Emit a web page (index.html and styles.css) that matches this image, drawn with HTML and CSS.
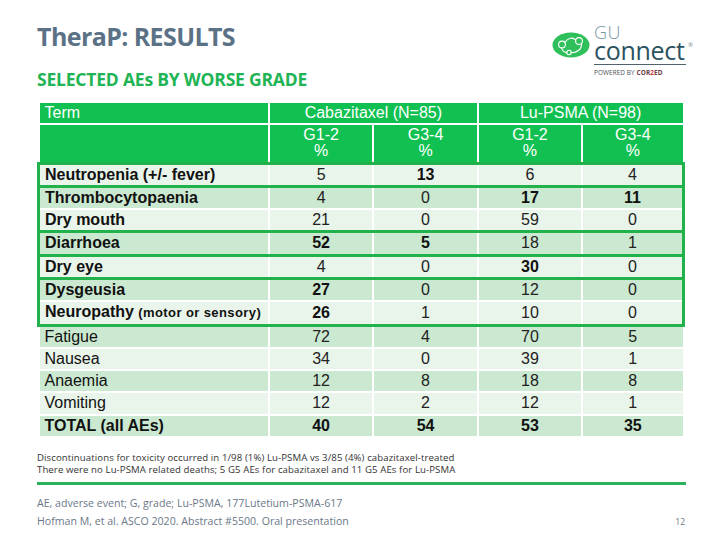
FILE: index.html
```html
<!DOCTYPE html>
<html lang="en">
<head>
<meta charset="utf-8">
<title>TheraP: RESULTS</title>
<link rel="stylesheet" href="styles.css">
</head>
<body>
<div class="slide">
  <header class="top">
    <div class="titles">
      <h1 class="title">TheraP: RESULTS</h1>
      <h2 class="subtitle">SELECTED AEs BY WORSE GRADE</h2>
    </div>
    <div class="logo">
      <svg class="logo-mark" width="38" height="26" viewBox="0 0 38 26" aria-hidden="true">
        <ellipse cx="19" cy="13" rx="18.5" ry="12.5" fill="#2fc05c"/>
        <g fill="none" stroke="#fff" stroke-width="1.1" stroke-linecap="round">
          <circle cx="10" cy="12.5" r="3.4"/>
          <circle cx="27" cy="9" r="3.4"/>
          <circle cx="17" cy="20.5" r="2.2"/>
          <path d="M12.8 10.5 C16 5.5 21 5 23.7 8"/>
          <path d="M29.5 11.5 C30 17 25 21 19.2 20.8"/>
          <path d="M9.5 15.9 C10.5 19 12.5 20.5 14.8 20.6"/>
        </g>
      </svg>
      <div class="logo-text">
        <div class="logo-gu">GU</div>
        <div class="logo-connect">connect</div>
        <div class="logo-powered">POWERED BY <span class="cor">COR<span class="two">2</span>ED</span></div>
        <span class="logo-reg">®</span>
      </div>
    </div>
  </header>

  <table class="ae-table">
    <colgroup>
      <col class="c-term">
      <col class="c-num">
      <col class="c-num">
      <col class="c-num">
      <col class="c-last">
    </colgroup>
    <thead>
      <tr class="h1row">
        <th class="term-h">Term</th>
        <th colspan="2">Cabazitaxel (N=85)</th>
        <th colspan="2">Lu-PSMA (N=98)</th>
      </tr>
      <tr class="h2row">
        <th></th>
        <th>G1-2<br>%</th>
        <th>G3-4<br>%</th>
        <th>G1-2<br>%</th>
        <th>G3-4<br>%</th>
      </tr>
    </thead>
    <tbody>
      <tr class="lt hl gt">
        <td class="term b">Neutropenia (+/- fever)</td><td>5</td><td class="b">13</td><td>6</td><td>4</td>
      </tr>
      <tr class="dk hl gt">
        <td class="term b">Thrombocytopaenia</td><td>4</td><td>0</td><td class="b">17</td><td class="b">11</td>
      </tr>
      <tr class="lt hl">
        <td class="term b">Dry mouth</td><td>21</td><td>0</td><td>59</td><td>0</td>
      </tr>
      <tr class="dk hl gt">
        <td class="term b">Diarrhoea</td><td class="b">52</td><td class="b">5</td><td>18</td><td>1</td>
      </tr>
      <tr class="lt hl gt">
        <td class="term b">Dry eye</td><td>4</td><td>0</td><td class="b">30</td><td>0</td>
      </tr>
      <tr class="dk hl gt">
        <td class="term b">Dysgeusia</td><td class="b">27</td><td>0</td><td>12</td><td>0</td>
      </tr>
      <tr class="lt hl">
        <td class="term b">Neuropathy <span class="small">(motor or sensory)</span></td><td class="b">26</td><td>1</td><td>10</td><td>0</td>
      </tr>
      <tr class="dk gt">
        <td class="term">Fatigue</td><td>72</td><td>4</td><td>70</td><td>5</td>
      </tr>
      <tr class="lt">
        <td class="term">Nausea</td><td>34</td><td>0</td><td>39</td><td>1</td>
      </tr>
      <tr class="dk">
        <td class="term">Anaemia</td><td>12</td><td>8</td><td>18</td><td>8</td>
      </tr>
      <tr class="lt">
        <td class="term">Vomiting</td><td>12</td><td>2</td><td>12</td><td>1</td>
      </tr>
      <tr class="dk">
        <td class="term b">TOTAL (all AEs)</td><td class="b">40</td><td class="b">54</td><td class="b">53</td><td class="b">35</td>
      </tr>
    </tbody>
  </table>

  <div class="notes">
    <p>Discontinuations for toxicity occurred in 1/98 (1%) Lu-PSMA vs 3/85 (4%) cabazitaxel-treated</p>
    <p>There were no Lu-PSMA related deaths; 5 G5 AEs for cabazitaxel and 11 G5 AEs for Lu-PSMA</p>
  </div>

  <div class="rule"></div>

  <footer class="refs">
    <div class="refs-text">
      <p>AE, adverse event; G, grade; Lu-PSMA, 177Lutetium-PSMA-617</p>
      <p>Hofman M, et al. ASCO 2020. Abstract #5500. Oral presentation</p>
    </div>
    <span class="page">12</span>
  </footer>
</div>
</body>
</html>
```

FILE: styles.css
```css
* { box-sizing: border-box; }

body {
  margin: 0;
  background: #fff;
}

p { margin: 0; }

.slide {
  width: 720px;
  height: 540px;
  padding: 24px 36px 0 37px;
  font-family: "Open Sans", "Liberation Sans", sans-serif;
  overflow: hidden;
}

.top {
  display: flex;
  justify-content: space-between;
  align-items: flex-start;
}

.title {
  margin: 0;
  font-size: 25px;
  line-height: 25px;
  font-weight: 700;
  color: #5b7286;
  letter-spacing: -0.6px;
}

.subtitle {
  margin: 21px 0 0;
  font-size: 17.5px;
  line-height: 18px;
  font-weight: 700;
  color: #20b455;
  letter-spacing: -0.2px;
}

/* logo */
.logo {
  display: flex;
  align-items: flex-start;
  margin-right: -2px;
}

.logo-mark {
  margin-top: 8px;
  margin-right: 4px;
}

.logo-text {
  position: relative;
  width: 92px;
  margin-top: 1px;
}

.logo-gu {
  font-size: 18px;
  line-height: 14px;
  font-weight: 300;
  color: #7897a2;
  letter-spacing: 0.5px;
}

.logo-connect {
  font-size: 25px;
  line-height: 22px;
  font-weight: 400;
  color: #2b5260;
  letter-spacing: -0.3px;
}

.logo-powered {
  margin-top: 3px;
  border-top: 1px solid #52616a;
  padding-top: 4px;
  font-size: 6.4px;
  line-height: 8px;
  color: #4a4f55;
  letter-spacing: 0.1px;
  white-space: nowrap;
}

.logo-powered .cor { color: #6b3a3f; font-weight: 700; }
.logo-powered .two { color: #d0303a; }

.logo-reg {
  position: absolute;
  left: 94px;
  top: 17px;
  font-size: 6px;
  line-height: 6px;
  color: #7b8a90;
}

/* table */
.ae-table {
  margin-top: 13px;
  margin-left: 0;
  width: 648px;
  border-collapse: collapse;
  font-family: "Liberation Sans", Arial, sans-serif;
  font-size: 16px;
  color: #222;
}

.c-term { width: 231px; }
.c-num { width: 105px; }
.c-last { width: 102px; }

.ae-table th,
.ae-table td {
  border: 2px solid #fff;
  padding: 0;
  text-align: center;
}

.ae-table th {
  background: #10c151;
  color: #fff;
  font-weight: 400;
}

.h1row th {
  height: 22px;
  line-height: 20px;
}

.h2row th {
  height: 39px;
  line-height: 16px;
}

.ae-table th.term-h {
  text-align: left;
  padding-left: 5px;
}

.ae-table td {
  line-height: 20.3px;
  font-weight: 400;
}

.ae-table td.term {
  text-align: left;
  padding-left: 5px;
  color: #111;
}

.ae-table td.b {
  font-weight: 700;
  color: #111;
}

.small {
  font-size: 13px;
  letter-spacing: 0.4px;
}

.lt td { background: #e9f5ea; }
.dk td { background: #cbe9d0; }

.gt td { border-top: 3px solid #22b24c; }
.hl td:first-child { border-left: 3px solid #22b24c; }
.hl td:last-child { border-right: 3px solid #22b24c; }

/* notes */
.notes {
  margin-top: 14px;
  font-size: 9.6px;
  line-height: 12px;
  letter-spacing: 0.1px;
  color: #333;
}

.rule {
  margin-top: 6px;
  width: 649px;
  height: 3px;
  background: #2bb35b;
}

.refs {
  margin-top: 9px;
  width: 648px;
  display: flex;
  justify-content: space-between;
  align-items: flex-end;
}

.refs-text {
  font-size: 10.6px;
  line-height: 18px;
  color: #6b7888;
}

.page {
  font-size: 8.5px;
  line-height: 17px;
  color: #6b7888;
}
```
